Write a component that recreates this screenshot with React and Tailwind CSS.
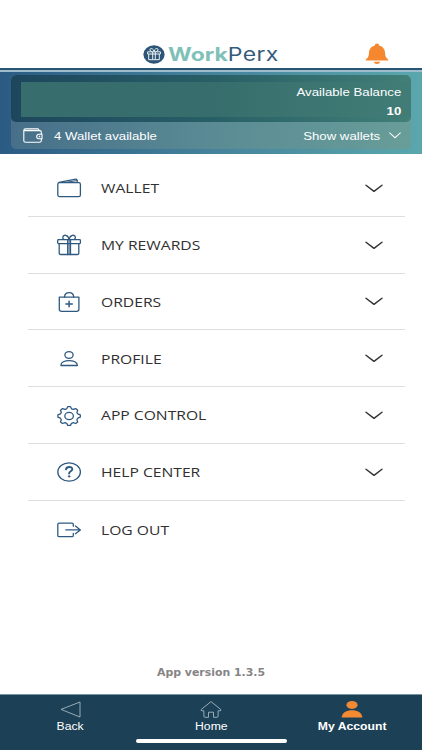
import clsx from "clsx";

const NAVY = "#2f5a80";

function Chevron({ className }) {
  return (
    <svg className={className} viewBox="0 0 18 9" fill="none" stroke="currentColor" preserveAspectRatio="none">
      <path d="M1 1.2 L9 7.4 L17 1.2" strokeWidth="1.4" strokeLinecap="round" strokeLinejoin="round" />
    </svg>
  );
}

function Icon({ children }) {
  return (
    <svg
      className="h-6 w-7 shrink-0"
      viewBox="0 0 28 24"
      fill="none"
      stroke={NAVY}
      strokeWidth="1.3"
      strokeLinecap="round"
      strokeLinejoin="round"
    >
      {children}
    </svg>
  );
}

const WalletIcon = () => (
  <Icon>
    <rect x="2.8" y="6.6" width="22.6" height="14" rx="1.6" />
    <path d="M4 6.4 L20.8 3.1 Q22 3 22.1 4.2 L22.3 6.4" />
    <path d="M10.5 6.4 L21.9 4.6" strokeWidth="1" />
  </Icon>
);

const RewardsIcon = () => (
  <Icon>
    <rect x="2.7" y="6.6" width="22.7" height="4" rx="0.8" />
    <path d="M4.2 10.7 V20.2 Q4.2 21.5 5.6 21.5 H22.4 Q23.8 21.5 23.8 20.2 V10.7" />
    <path d="M12.7 6.6 V21.5 M15.5 6.6 V21.5" />
    <path d="M14.1 6.4 V21.5" strokeWidth="1" />
    <path d="M14 6.4 C13.4 1.4 8 1.2 7.8 4.2 C7.7 5.4 8.4 6.2 9.2 6.5 M14.2 6.4 C14.8 1.4 20.2 1.2 20.4 4.2 C20.5 5.4 19.8 6.2 19 6.5" />
  </Icon>
);

const OrdersIcon = () => (
  <Icon>
    <path d="M4.3 7.1 H23.9 V19.2 Q23.9 21.3 21.6 21.3 H6.6 Q4.3 21.3 4.3 19.2 Z" />
    <path d="M9.5 7 C9.7 1.1 18.5 1.1 18.7 7" />
    <path d="M14.1 11.2 V16.8 M10.9 14 H17.3" strokeWidth="1.5" />
  </Icon>
);

const ProfileIcon = () => (
  <Icon>
    <ellipse cx="14" cy="8" rx="4.1" ry="3.4" />
    <path d="M5.9 18.5 C5.6 11.9 22.5 11.9 22.4 18.5 Z" />
  </Icon>
);

const ControlIcon = () => (
  <Icon>
    <path d="M12.7 2.7 H15.5 L16.5 4.8 L18.2 5.4 L20.7 4.6 L22.7 6.2 L21.9 8.4 L22.8 9.8 L25.3 10.9 V13.2 L22.8 14.2 L21.9 15.8 L22.7 17.9 L20.7 19.5 L18.2 18.7 L16.5 19.3 L15.5 21.4 H12.7 L11.7 19.3 L10 18.7 L7.5 19.5 L5.5 17.9 L6.3 15.8 L5.4 14.2 L2.9 13.2 V10.9 L5.4 9.8 L6.3 8.4 L5.5 6.2 L7.5 4.6 L10 5.4 L11.7 4.8 Z" />
    <ellipse cx="14.1" cy="12" rx="4.3" ry="3.7" />
  </Icon>
);

const HelpIcon = () => (
  <Icon>
    <ellipse cx="14.1" cy="12" rx="11.3" ry="9.2" />
    <path d="M11 9.4 C11.4 6.2 17.6 6.2 17.3 9.3 C17.1 11.3 14.1 11.4 14.1 13.6" strokeWidth="1.9" />
    <circle cx="14.1" cy="16.4" r="0.8" fill={NAVY} strokeWidth="0.8" />
  </Icon>
);

const LogoutIcon = () => (
  <Icon>
    <path d="M18.3 8.2 V6.3 Q18.3 5.1 17 5.1 H4.2 Q2.8 5.1 2.8 6.4 V17.4 Q2.8 18.7 4.2 18.7 H17 Q18.3 18.7 18.3 17.5 V15.4" />
    <path d="M10.8 11.9 H25.1 M20.4 8 L25.4 11.9 L20.4 15.7" />
  </Icon>
);

const menu = [
  { label: "WALLET", Icon: WalletIcon },
  { label: "MY REWARDS", Icon: RewardsIcon },
  { label: "ORDERS", Icon: OrdersIcon },
  { label: "PROFILE", Icon: ProfileIcon },
  { label: "APP CONTROL", Icon: ControlIcon },
  { label: "HELP CENTER", Icon: HelpIcon },
  { label: "LOG OUT", Icon: LogoutIcon, last: true },
];

function Header() {
  return (
    <header className="flex h-[68px] items-end justify-between pr-[33px] pl-[143px]">
      <div className="mb-[3px] flex h-[22px] items-center">
        <svg className="h-[19px] w-[22px]" viewBox="0 0 22 19">
          <ellipse cx="11" cy="9.5" rx="10.6" ry="9.2" fill="#2c5577" />
          <g fill="none" stroke="#fff">
            <path d="M4.6 6.8 H17.4 V9 H4.6 Z M5.7 9 V14.7 H16.3 V9 M9.7 7 V14.5 M12.3 7 V14.5" strokeWidth="0.9" />
            <path d="M11 6.5 C10.5 3 6.7 2.7 7 5 C7.1 5.9 8 6.5 8.6 6.5 M11 6.5 C11.5 3 15.3 2.7 15 5 C14.9 5.9 14 6.5 13.4 6.5" strokeWidth="0.9" />
          </g>
        </svg>
        <h1 className="ml-[3px] origin-left scale-x-[1.24] font-['Inter',sans-serif] text-[18.5px] leading-none whitespace-nowrap">
          <span className="font-bold text-[#7fc1b9]">Work</span>
          <span className="font-normal tracking-[0.3px] text-[#355b7c]">Perx</span>
        </h1>
      </div>
      <svg className="mb-[3px] h-[22px] w-[24px]" viewBox="0 0 24 22" fill="#f5882f">
        <path d="M12 0.5 C13.3 0.5 14.1 1.2 14 2.4 C18 3.4 19.9 6.2 20 9.5 C20.1 13 20.7 14.4 23 16.2 Q23.9 17.4 22.6 17.5 H1.4 Q0.1 17.4 1 16.2 C3.3 14.4 3.9 13 4 9.5 C4.1 6.2 6 3.4 10 2.4 C9.9 1.2 10.7 0.5 12 0.5 Z" />
        <path d="M8.9 18.7 H15.1 C14.8 21.7 9.2 21.7 8.9 18.7 Z" />
      </svg>
    </header>
  );
}

function Balance() {
  return (
    <section className="h-[86px] border-t-2 border-[#285476] font-['Liberation_Sans',sans-serif] text-white">
      <div className="h-[2px] bg-[#9fbccb]" />
      <div className="h-[82px] bg-linear-to-r from-[#2b5b83] via-[#45829b] to-[#5ba7ad] px-[11px] pt-[3px]">
        <div className="h-[74px] overflow-hidden rounded-[5px] bg-linear-to-r from-[#476f89] via-[#5a8b94] to-[#689d99]">
          <div className="h-[47px] rounded-[5px] bg-linear-to-r from-[#1d465d] via-[#285f66] to-[#417f77] pt-[7px] pl-[10px]">
            <div className="flex h-[35px] flex-col items-end bg-linear-to-r from-[#376e6d] via-[#376e6d] to-[#417d76] pr-[10px]">
              <p className="mt-[3px] origin-right scale-x-[1.2] text-[11px] leading-[14px]">Available Balance</p>
              <p className="mt-[5px] origin-right scale-x-[1.2] text-[11px] leading-[14px] font-bold">10</p>
            </div>
          </div>
          <div className="flex h-[27px] items-center pr-[10px] pl-[12px]">
            <svg className="h-4 w-5" viewBox="0 0 20 16" fill="none" stroke="#fff" strokeWidth="1.1">
              <path d="M18.3 6.2 V4 Q18.3 2.6 16.8 2.6 H2.6 Q0.8 2.6 0.8 1.9 M16 2.4 Q16 0.9 14.6 0.9 H2.6 Q0.8 0.9 0.8 2.5 V12.7 Q0.8 14.3 2.6 14.3 H16.6 Q18.3 14.3 18.3 12.7 V10.8" />
              <path d="M19 6.2 H16 Q13.7 6.4 13.7 8.5 Q13.7 10.6 16 10.8 H19 Z" />
              <circle cx="16.5" cy="8.5" r="0.6" fill="#fff" strokeWidth="0.5" />
            </svg>
            <p className="ml-[11px] origin-left scale-x-[1.2] text-[11px] leading-[14px]">4 Wallet available</p>
            <p className="mr-[9px] ml-auto origin-right scale-x-[1.2] text-[11px] leading-[14px]">Show wallets</p>
            <Chevron className="h-[7px] w-[12px]" />
          </div>
        </div>
      </div>
    </section>
  );
}

function MenuRow({ item }) {
  return (
    <li
      className={clsx(
        "flex h-[56.8px] items-center pt-px pr-[22px] pl-[27px]",
        !item.last && "border-b border-[#dedede]"
      )}
    >
      <item.Icon />
      <span className="ml-[18px] origin-left scale-x-[1.16] font-['Open_Sans',sans-serif] text-[13.5px] text-[#303030]">
        {item.label}
      </span>
      {!item.last && <Chevron className="ml-auto h-[9px] w-[18px] text-[#303030]" />}
    </li>
  );
}

function NavItem({ label, active, children }) {
  return (
    <div className="flex flex-1 flex-col items-center pt-[5px]">
      <svg className="h-[20px] w-[24px]" viewBox="0 0 24 20" fill="none">
        {children}
      </svg>
      <span
        className={clsx(
          "mt-[1px] scale-x-[1.22] text-[10px] leading-[12px] text-white",
          active && "font-bold"
        )}
      >
        {label}
      </span>
    </div>
  );
}

function BottomNav() {
  return (
    <nav className="flex h-[56px] flex-col border-t border-[#7893a1] bg-[#1c4056] font-['Liberation_Sans',sans-serif]">
      <div className="flex h-[44px]">
        <NavItem label="Back">
          <path d="M22 2 V17 L3 9.4 Z" stroke="#a5b8c1" strokeWidth="0.9" strokeLinejoin="round" />
        </NavItem>
        <NavItem label="Home">
          <path
            d="M12 1.6 L2.4 9.3 Q1.4 10.6 3 10.8 H4.9 V16.2 Q4.9 17.3 6.1 17.3 H9.5 V12.2 H14.5 V17.3 H17.9 Q19.1 17.3 19.1 16.2 V10.8 H21 Q22.6 10.6 21.6 9.3 Z"
            stroke="#a5b8c1"
            strokeWidth="0.9"
            strokeLinejoin="round"
          />
        </NavItem>
        <NavItem label="My Account" active>
          <ellipse cx="12" cy="5" rx="5.6" ry="3.9" fill="#f28a34" />
          <path d="M1.7 17.5 C1.7 7.7 22.3 7.7 22.3 17.5 Z" fill="#f28a34" />
        </NavItem>
      </div>
      <div className="mx-auto h-[4px] w-[151px] rounded-full bg-white" />
    </nav>
  );
}

export default function App() {
  return (
    <div className="flex h-[750px] w-[422px] flex-col overflow-hidden bg-white">
      <Header />
      <Balance />
      <main className="flex flex-1 flex-col">
        <ul className="mt-[6px] mr-[17px] ml-[28px]">
          {menu.map((item) => (
            <MenuRow key={item.label} item={item} />
          ))}
        </ul>
        <p className="mt-auto mb-[14px] scale-x-[1.09] text-center font-['DejaVu_Sans',sans-serif] text-[10px] leading-[14px] font-bold text-[#858585]">
          App version 1.3.5
        </p>
      </main>
      <BottomNav />
    </div>
  );
}
